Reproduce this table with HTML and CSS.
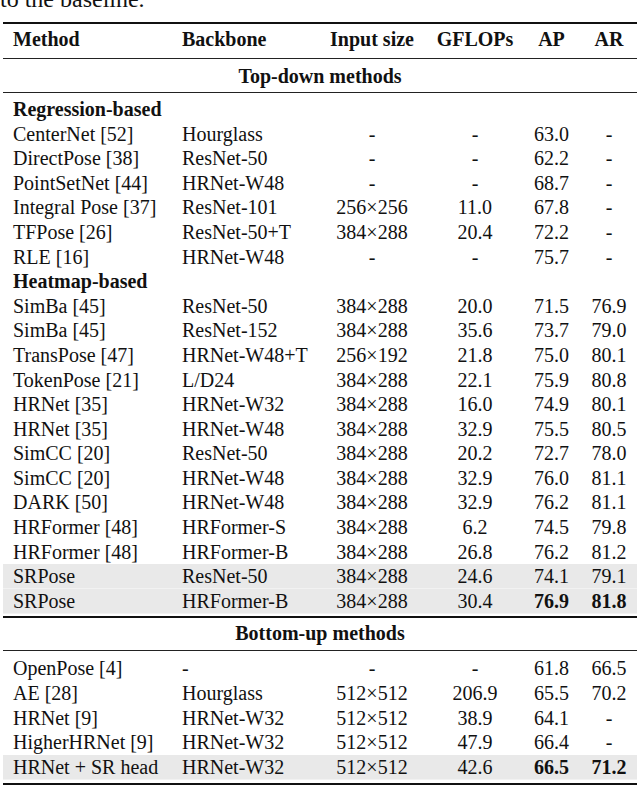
FILE: index.html
```html
<!DOCTYPE html>
<html lang="en">
<head>
<meta charset="utf-8">
<title>Comparison on COCO</title>
<link rel="stylesheet" href="styles.css">
</head>
<body>
<p class="lead">to the baseline.</p>
<table class="results">
  <colgroup>
    <col class="c-method">
    <col class="c-backbone">
    <col class="c-input">
    <col class="c-gflops">
    <col class="c-ap">
    <col class="c-ar">
  </colgroup>
  <thead>
    <tr class="head">
      <th class="l">Method</th>
      <th class="l">Backbone</th>
      <th>Input size</th>
      <th>GFLOPs</th>
      <th>AP</th>
      <th class="ar">AR</th>
    </tr>
  </thead>
  <tbody>
    <tr class="section"><td colspan="6">Top-down methods</td></tr>
    <tr class="group first"><td colspan="6">Regression-based</td></tr>
    <tr><td class="l">CenterNet [52]</td><td class="l">Hourglass</td><td>-</td><td>-</td><td>63.0</td><td class="ar">-</td></tr>
    <tr><td class="l">DirectPose [38]</td><td class="l">ResNet-50</td><td>-</td><td>-</td><td>62.2</td><td class="ar">-</td></tr>
    <tr><td class="l">PointSetNet [44]</td><td class="l">HRNet-W48</td><td>-</td><td>-</td><td>68.7</td><td class="ar">-</td></tr>
    <tr><td class="l">Integral Pose [37]</td><td class="l">ResNet-101</td><td>256×256</td><td>11.0</td><td>67.8</td><td class="ar">-</td></tr>
    <tr><td class="l">TFPose [26]</td><td class="l">ResNet-50+T</td><td>384×288</td><td>20.4</td><td>72.2</td><td class="ar">-</td></tr>
    <tr><td class="l">RLE [16]</td><td class="l">HRNet-W48</td><td>-</td><td>-</td><td>75.7</td><td class="ar">-</td></tr>
    <tr class="group"><td colspan="6">Heatmap-based</td></tr>
    <tr><td class="l">SimBa [45]</td><td class="l">ResNet-50</td><td>384×288</td><td>20.0</td><td>71.5</td><td class="ar">76.9</td></tr>
    <tr><td class="l">SimBa [45]</td><td class="l">ResNet-152</td><td>384×288</td><td>35.6</td><td>73.7</td><td class="ar">79.0</td></tr>
    <tr><td class="l">TransPose [47]</td><td class="l">HRNet-W48+T</td><td>256×192</td><td>21.8</td><td>75.0</td><td class="ar">80.1</td></tr>
    <tr><td class="l">TokenPose [21]</td><td class="l">L/D24</td><td>384×288</td><td>22.1</td><td>75.9</td><td class="ar">80.8</td></tr>
    <tr><td class="l">HRNet [35]</td><td class="l">HRNet-W32</td><td>384×288</td><td>16.0</td><td>74.9</td><td class="ar">80.1</td></tr>
    <tr><td class="l">HRNet [35]</td><td class="l">HRNet-W48</td><td>384×288</td><td>32.9</td><td>75.5</td><td class="ar">80.5</td></tr>
    <tr><td class="l">SimCC [20]</td><td class="l">ResNet-50</td><td>384×288</td><td>20.2</td><td>72.7</td><td class="ar">78.0</td></tr>
    <tr><td class="l">SimCC [20]</td><td class="l">HRNet-W48</td><td>384×288</td><td>32.9</td><td>76.0</td><td class="ar">81.1</td></tr>
    <tr><td class="l">DARK [50]</td><td class="l">HRNet-W48</td><td>384×288</td><td>32.9</td><td>76.2</td><td class="ar">81.1</td></tr>
    <tr><td class="l">HRFormer [48]</td><td class="l">HRFormer-S</td><td>384×288</td><td>6.2</td><td>74.5</td><td class="ar">79.8</td></tr>
    <tr><td class="l">HRFormer [48]</td><td class="l">HRFormer-B</td><td>384×288</td><td>26.8</td><td>76.2</td><td class="ar">81.2</td></tr>
    <tr class="hl"><td class="l">SRPose</td><td class="l">ResNet-50</td><td>384×288</td><td>24.6</td><td>74.1</td><td class="ar">79.1</td></tr>
    <tr class="hl end"><td class="l">SRPose</td><td class="l">HRFormer-B</td><td>384×288</td><td>30.4</td><td><b>76.9</b></td><td class="ar"><b>81.8</b></td></tr>
    <tr class="section thick"><td colspan="6">Bottom-up methods</td></tr>
    <tr class="first"><td class="l">OpenPose [4]</td><td class="l">-</td><td>-</td><td>-</td><td>61.8</td><td class="ar">66.5</td></tr>
    <tr><td class="l">AE [28]</td><td class="l">Hourglass</td><td>512×512</td><td>206.9</td><td>65.5</td><td class="ar">70.2</td></tr>
    <tr><td class="l">HRNet [9]</td><td class="l">HRNet-W32</td><td>512×512</td><td>38.9</td><td>64.1</td><td class="ar">-</td></tr>
    <tr><td class="l">HigherHRNet [9]</td><td class="l">HRNet-W32</td><td>512×512</td><td>47.9</td><td>66.4</td><td class="ar">-</td></tr>
    <tr class="hl end last"><td class="l">HRNet + SR head</td><td class="l">HRNet-W32</td><td>512×512</td><td>42.6</td><td><b>66.5</b></td><td class="ar"><b>71.2</b></td></tr>
  </tbody>
</table>
</body>
</html>
```
FILE: styles.css
```css
html, body {
  margin: 0;
  padding: 0;
  background: #ffffff;
}

body {
  color: #111111;
  font-family: "Liberation Serif", "Times New Roman", serif;
}

.lead {
  margin: -13px 0 0 0;
  font-size: 24px;
  line-height: 24px;
}

.results {
  margin: 11px 0 0 3px;
  width: 634px;
  table-layout: fixed;
  border-collapse: separate;
  border-spacing: 0;
  font-size: 20px;
  line-height: 24.6px;
}

.c-method { width: 169px; }
.c-backbone { width: 148px; }
.c-input { width: 104px; }
.c-gflops { width: 102px; }
.c-ap { width: 51px; }
.c-ar { width: 60px; }

.results th,
.results td {
  padding: 0;
  text-align: center;
  white-space: nowrap;
  vertical-align: top;
}

.results th {
  font-weight: bold;
}

.results .l {
  text-align: left;
  padding-left: 10px;
}

.results .ar {
  padding-left: 4px;
}

.results b {
  font-weight: bold;
}

/* header */
.head th {
  border-top: 2px solid #111;
  border-bottom: 1px solid #222;
  padding-top: 3px;
  padding-bottom: 6.4px;
}

/* section titles */
.section td {
  font-weight: bold;
  text-align: center;
  padding-top: 5px;
  padding-bottom: 3.4px;
  border-bottom: 1px solid #222;
}

.section.thick td {
  border-top: 2px solid #111;
  padding-top: 3px;
  padding-bottom: 4.4px;
}

/* group labels */
.group td {
  font-weight: bold;
  text-align: left;
  padding-left: 10px;
}

.first td {
  padding-top: 4px;
}

.first:not(.group) td {
  padding-top: 5.5px;
}

/* highlighted rows */
.hl td {
  background: linear-gradient(#e9e9e9, #e9e9e9) top left / 100% 24.6px no-repeat;
}

.end td {
  padding-bottom: 2.4px;
}

.last td {
  padding-bottom: 3.5px;
  border-bottom: 2px solid #111;
}
```
